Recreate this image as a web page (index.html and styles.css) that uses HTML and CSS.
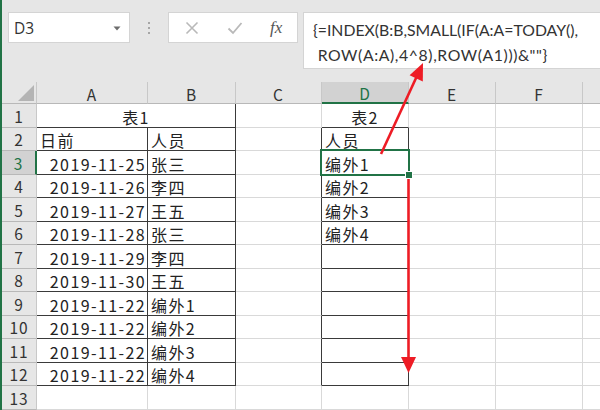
FILE: index.html
```html
<!DOCTYPE html>
<html lang="zh">
<head>
<meta charset="utf-8">
<title>Excel</title>
<link rel="stylesheet" href="styles.css">
</head>
<body>
<div class="app">
  <div class="topbar">
    <div class="namebox">
      <span class="name">D3</span>
      <svg class="dd" width="8" height="5" viewBox="0 0 8 5"><path d="M0.5 0.5 L7.5 0.5 L4 4.5 Z" fill="#6d6d6d"/></svg>
    </div>
    <div class="sep"><i></i><i></i><i></i></div>
    <div class="fxbox">
      <svg class="ico" width="14" height="14" viewBox="0 0 14 14"><path d="M1.5 1.5 L12.5 12.5 M12.5 1.5 L1.5 12.5" stroke="#b9b9b9" stroke-width="1.6" fill="none"/></svg>
      <svg class="ico" width="16" height="14" viewBox="0 0 16 14"><path d="M1.5 7.5 L6 12 L14.5 2" stroke="#b9b9b9" stroke-width="1.8" fill="none"/></svg>
      <span class="fx">fx</span>
    </div>
    <div class="formula"><span class="l1">{=INDEX(B:B,SMALL(IF(A:A=TODAY(),</span><br><span class="l2">&nbsp;ROW(A:A),4^8),ROW(A1)))&amp;""}</span></div>
  </div>
  <div class="sheet">
    <div class="h corner"><span class="tri"></span></div>
    <div class="h col">A</div>
    <div class="h col">B</div>
    <div class="h col">C</div>
    <div class="h col sel">D</div>
    <div class="h col">E</div>
    <div class="h col">F</div>
    <div class="h col last"></div>

    <div class="h row">1</div>
    <div class="c span2 ctr dr db">表1</div>
    <div class="c"></div>
    <div class="c ctr db">表2</div>
    <div class="c"></div><div class="c"></div><div class="c last"></div>

    <div class="h row">2</div>
    <div class="c dr db">日前</div><div class="c dr db">人员</div><div class="c dr"></div><div class="c dr db">人员</div>
    <div class="c"></div><div class="c"></div><div class="c last"></div>

    <div class="h row sel">3</div>
    <div class="c dr db num">2019-11-25</div><div class="c dr db">张三</div><div class="c dr"></div><div class="c dr db active">编外1<span class="handle"></span></div>
    <div class="c"></div><div class="c"></div><div class="c last"></div>

    <div class="h row">4</div>
    <div class="c dr db num">2019-11-26</div><div class="c dr db">李四</div><div class="c dr"></div><div class="c dr db">编外2</div>
    <div class="c"></div><div class="c"></div><div class="c last"></div>

    <div class="h row">5</div>
    <div class="c dr db num">2019-11-27</div><div class="c dr db">王五</div><div class="c dr"></div><div class="c dr db">编外3</div>
    <div class="c"></div><div class="c"></div><div class="c last"></div>

    <div class="h row">6</div>
    <div class="c dr db num">2019-11-28</div><div class="c dr db">张三</div><div class="c dr"></div><div class="c dr db">编外4</div>
    <div class="c"></div><div class="c"></div><div class="c last"></div>

    <div class="h row">7</div>
    <div class="c dr db num">2019-11-29</div><div class="c dr db">李四</div><div class="c dr"></div><div class="c dr db"></div>
    <div class="c"></div><div class="c"></div><div class="c last"></div>

    <div class="h row">8</div>
    <div class="c dr db num">2019-11-30</div><div class="c dr db">王五</div><div class="c dr"></div><div class="c dr db"></div>
    <div class="c"></div><div class="c"></div><div class="c last"></div>

    <div class="h row">9</div>
    <div class="c dr db num">2019-11-22</div><div class="c dr db">编外1</div><div class="c dr"></div><div class="c dr db"></div>
    <div class="c"></div><div class="c"></div><div class="c last"></div>

    <div class="h row">10</div>
    <div class="c dr db num">2019-11-22</div><div class="c dr db">编外2</div><div class="c dr"></div><div class="c dr db"></div>
    <div class="c"></div><div class="c"></div><div class="c last"></div>

    <div class="h row">11</div>
    <div class="c dr db num">2019-11-22</div><div class="c dr db">编外3</div><div class="c dr"></div><div class="c dr db"></div>
    <div class="c"></div><div class="c"></div><div class="c last"></div>

    <div class="h row">12</div>
    <div class="c dr db num">2019-11-22</div><div class="c dr db">编外4</div><div class="c dr"></div><div class="c dr db"></div>
    <div class="c"></div><div class="c"></div><div class="c last"></div>

    <div class="h row">13</div>
    <div class="c"></div><div class="c"></div><div class="c"></div><div class="c"></div>
    <div class="c"></div><div class="c"></div><div class="c last"></div>
  </div>
  <svg class="arrows" width="600" height="410" viewBox="0 0 600 410">
    <line x1="381" y1="154" x2="416.5" y2="77" stroke="#ee1c25" stroke-width="2.6"/>
    <polygon points="423,63 422.8,81.5 409.6,75.3" fill="#ee1c25"/>
    <line x1="408.5" y1="176" x2="408.5" y2="359" stroke="#ee1c25" stroke-width="2.6"/>
    <polygon points="401,357 416,357 408.5,373" fill="#ee1c25"/>
  </svg>
</div>
</body>
</html>
```
FILE: styles.css
```css
html, body {
  margin: 0;
  padding: 0;
  background: #e6e6e6;
}
.app {
  position: relative;
  width: 598px;
  height: 410px;
  overflow: hidden;
  border-left: 2px solid #217346;
  background: #e6e6e6;
  font-family: "Noto Sans CJK SC", sans-serif;
}
.topbar {
  height: 82px;
  box-sizing: border-box;
  padding-top: 12px;
  padding-left: 6px;
  display: flex;
  align-items: flex-start;
}
.namebox {
  width: 122px;
  height: 31px;
  box-sizing: border-box;
  background: #fff;
  border: 1px solid #d4d4d4;
  display: flex;
  align-items: center;
  justify-content: space-between;
  padding: 0 8px 0 5px;
}
.name {
  font-family: "Open Sans", sans-serif;
  font-size: 15.5px;
  color: #333;
}
.dd { margin-top: 1px; }
.sep {
  width: 38px;
  height: 31px;
  display: flex;
  flex-direction: column;
  align-items: center;
  justify-content: center;
  gap: 3px;
}
.sep i {
  display: block;
  width: 2px;
  height: 2px;
  background: #a6a6a6;
}
.fxbox {
  width: 130px;
  height: 31px;
  box-sizing: border-box;
  background: #fff;
  border: 1px solid #d4d4d4;
  display: flex;
  align-items: center;
  padding-left: 16px;
  gap: 0;
}
.fxbox .ico:first-child { margin-right: 28px; }
.fxbox .ico:nth-child(2) { margin-right: 27px; }
.fx {
  font-family: "Liberation Serif", serif;
  font-style: italic;
  font-size: 17px;
  color: #555;
}
.formula {
  margin-left: 5px;
  flex: 1;
  height: 57px;
  box-sizing: border-box;
  background: #fff;
  border: 1px solid #d4d4d4;
  border-right: none;
  padding: 4px 0 0 9px;
  font-family: "Lato", sans-serif;
  font-size: 15.8px;
  line-height: 25px;
  color: #333;
  white-space: nowrap;
}
.l2 { letter-spacing: 0.6px; }
.sheet {
  display: grid;
  grid-template-columns: 35px 111px 88px 86px 87px 87px 87px 17px;
  grid-template-rows: 22px repeat(13, 23.5px);
  background: #fff;
}
.h {
  background: #e6e6e6;
  box-sizing: border-box;
  border-right: 1px solid #c8c8c8;
  border-bottom: 1px solid #b8b8b8;
  color: #333;
  font-size: 15.5px;
  letter-spacing: 1px;
  display: flex;
  align-items: center;
  justify-content: center;
}
.h.col { padding-top: 2px; }
.h.row { padding-top: 1px; }
.h.row.sel {
  background: #d2d2d2;
  color: #217346;
  border-right: 2px solid #217346;
}
.h.col.sel {
  background: #d2d2d2;
  color: #217346;
  border-bottom: 2px solid #217346;
}
.h.last { border-right: none; }
.corner { position: relative; }
.tri {
  width: 0;
  height: 0;
  border-left: 16px solid transparent;
  border-bottom: 16px solid #b4b4b4;
  position: absolute;
  right: 2px;
  bottom: 2px;
}
.c {
  box-sizing: border-box;
  border-right: 1px solid #d9d9d9;
  border-bottom: 1px solid #d9d9d9;
  font-size: 16px;
  letter-spacing: 1.4px;
  color: #222;
  display: flex;
  align-items: center;
  padding: 3px 0 0 3px;
  white-space: nowrap;
}
.c.last { border-right: none; }
.span2 { grid-column: span 2; }
.ctr { justify-content: center; padding-left: 0; }
.num { justify-content: flex-end; padding-right: 1px; padding-left: 0; }
.dr { border-right-color: #3a3a3a; }
.db { border-bottom-color: #3a3a3a; }
.active { position: relative; }
.active::after {
  content: "";
  position: absolute;
  left: -2px;
  top: -2px;
  right: -2px;
  bottom: -2px;
  border: 2px solid #217346;
  pointer-events: none;
}
.handle {
  position: absolute;
  right: -5px;
  bottom: -5px;
  width: 6px;
  height: 6px;
  background: #217346;
  border: 1px solid #fff;
  z-index: 2;
}
.arrows {
  position: absolute;
  left: -2px;
  top: 0;
  pointer-events: none;
}
```
